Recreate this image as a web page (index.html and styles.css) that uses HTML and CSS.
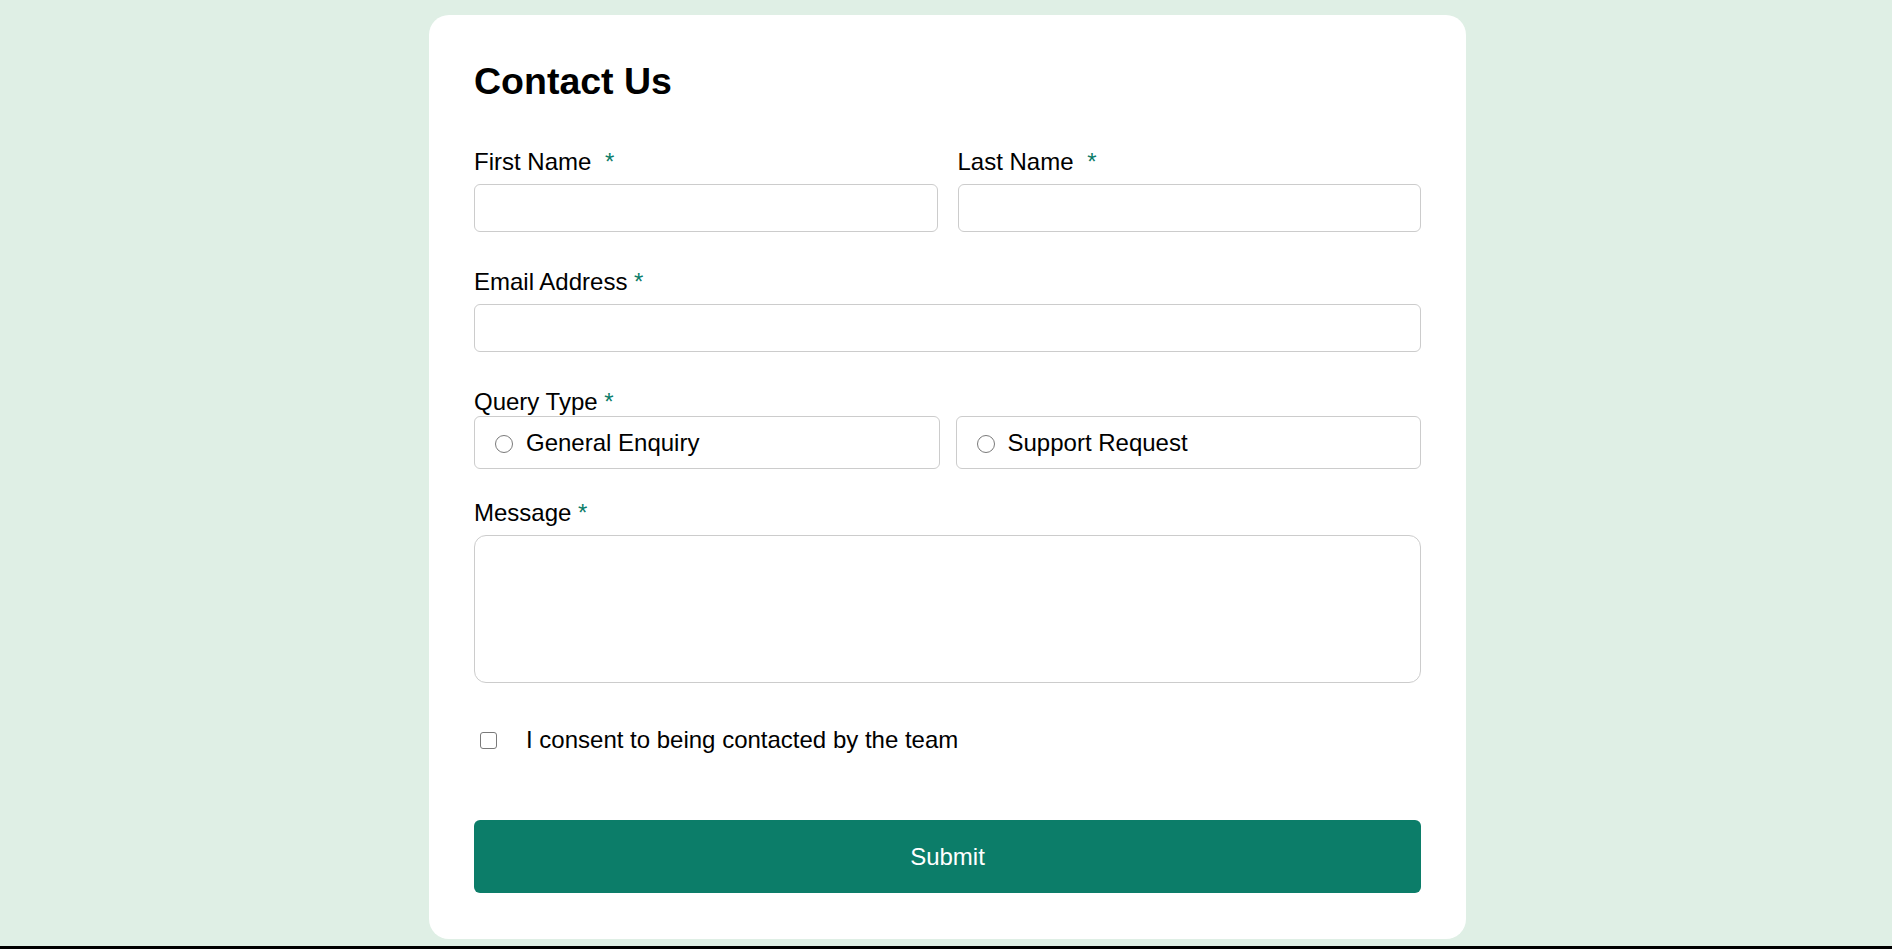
FILE: index.html
```html
<!DOCTYPE html>
<html lang="en">
<head>
<meta charset="utf-8">
<title>Contact Us</title>
<link rel="stylesheet" href="styles.css">
</head>
<body>
<div class="page">
  <main class="card">
    <h1 class="title">Contact Us</h1>
    <form class="form">
      <div class="row two">
        <div class="field">
          <label class="label" for="fn">First Name <span class="req wide">*</span></label>
          <input class="input" id="fn" type="text">
        </div>
        <div class="field">
          <label class="label" for="ln">Last Name <span class="req wide">*</span></label>
          <input class="input" id="ln" type="text">
        </div>
      </div>
      <div class="row">
        <div class="field">
          <label class="label" for="em">Email Address <span class="req">*</span></label>
          <input class="input" id="em" type="email">
        </div>
      </div>
      <div class="row query">
        <div class="label tight">Query Type <span class="req">*</span></div>
        <div class="options">
          <label class="option"><input class="radio" type="radio" name="q"><span>General Enquiry</span></label>
          <label class="option"><input class="radio" type="radio" name="q"><span>Support Request</span></label>
        </div>
      </div>
      <div class="row">
        <div class="field">
          <label class="label" for="msg">Message <span class="req">*</span></label>
          <textarea class="textarea" id="msg"></textarea>
        </div>
      </div>
      <label class="consent"><input class="check" type="checkbox"><span>I consent to being contacted by the team</span></label>
      <button class="submit" type="button">Submit</button>
    </form>
  </main>
  <div class="bottom-bar"></div>
</div>
</body>
</html>
```
FILE: styles.css
```css
* { box-sizing: border-box; }
html, body { margin: 0; padding: 0; }
body {
  background: #dfefe5;
  font-family: "Liberation Sans", Arial, sans-serif;
  color: #000;
  height: 949px;
  overflow: hidden;
}
.page {
  height: 949px;
  display: flex;
  flex-direction: column;
  align-items: center;
  padding-top: 15px;
  padding-left: 3px;
}
.card {
  width: 1037px;
  height: 924px;
  background: #fff;
  border-radius: 20px;
  padding: 45px 45px 45px;
}
.title {
  margin: 0 0 46px;
  font-size: 37.5px;
  line-height: 42px;
  font-weight: 700;
}
.form { display: flex; flex-direction: column; }
.row { margin-bottom: 36px; }
.row.query { margin-bottom: 30px; }
.row.two {
  display: grid;
  grid-template-columns: 1fr 1fr;
  column-gap: 20px;
}
.field { display: flex; flex-direction: column; }
.label {
  display: block;
  font-size: 24px;
  line-height: 27px;
  margin-bottom: 9px;
}
.label.tight { margin-bottom: 1px; }
.req { color: #0c7d69; }
.req.wide { margin-left: 7px; }
.input {
  height: 48px;
  border: 1px solid #cccccc;
  border-radius: 6px;
  font: inherit;
  font-size: 20px;
  padding: 0 14px;
  background: #fff;
}
.options {
  display: grid;
  grid-template-columns: 1fr 1fr;
  column-gap: 16px;
}
.option {
  height: 53px;
  border: 1px solid #cccccc;
  border-radius: 6px;
  display: flex;
  align-items: center;
  padding-left: 20px;
  gap: 13px;
  font-size: 24px;
}
.radio {
  appearance: none;
  -webkit-appearance: none;
  width: 18px;
  height: 18px;
  margin: 2px 0 0 0;
  border: 1.5px solid #7a7a7a;
  border-radius: 50%;
  background: #fff;
}
.textarea {
  height: 148px;
  border: 1px solid #cccccc;
  border-radius: 12px;
  resize: none;
  font: inherit;
  padding: 12px 14px;
}
.consent {
  display: flex;
  align-items: center;
  gap: 29px;
  font-size: 24px;
  line-height: 28px;
  padding-left: 6px;
  margin-top: 7px;
}
.check {
  appearance: none;
  -webkit-appearance: none;
  width: 17px;
  height: 17px;
  margin: 0;
  border: 1.5px solid #7a7a7a;
  border-radius: 3px;
  background: #fff;
}
.submit {
  margin-top: 66px;
  height: 73px;
  border: 0;
  border-radius: 6px;
  background: #0c7d69;
  color: #fff;
  font: inherit;
  font-size: 24px;
}
.bottom-bar {
  margin-top: auto;
  align-self: stretch;
  margin-left: -3px;
  height: 3px;
  background: #000;
}
```
